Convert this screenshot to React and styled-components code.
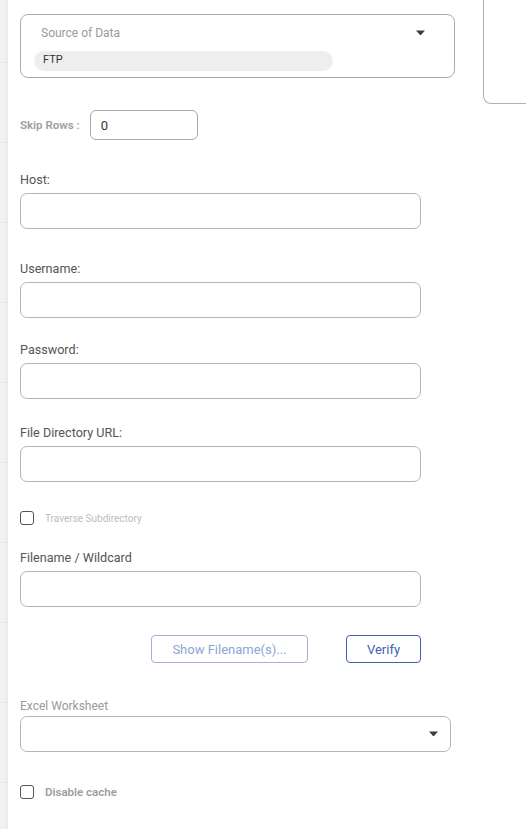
import React from "react";
import styled, { createGlobalStyle } from "styled-components";

const GlobalStyle = createGlobalStyle`
    html, body {
        margin: 0;
        padding: 0;
        background: #ffffff;
        overflow: hidden;
    }
    * {
        box-sizing: border-box;
    }
`;

function Caret() {
    return (
        <svg width="9" height="6" viewBox="0 0 9 6">
            <path d="M0 0.5 L9 0.5 L5 5 L4 5 Z" fill="#3d3d3d" />
        </svg>
    );
}

function TextField({ label, top }) {
    return (
        <Field $top={top}>
            <Label>{label}</Label>
            <Input type="text" />
        </Field>
    );
}

function Check({ label, top, small }) {
    return (
        <CheckRow $top={top}>
            <Box />
            <CheckText $small={small}>{label}</CheckText>
        </CheckRow>
    );
}

export default function App() {
    return (
        <Page>
            <GlobalStyle />
            <Strip />
            <Content>
                <TopRow>
                    <SourceBox>
                        <SourceHead>
                            <SourceLabel>Source of Data</SourceLabel>
                            <Caret />
                        </SourceHead>
                        <Chip>FTP</Chip>
                    </SourceBox>
                    <SidePanel />
                </TopRow>

                <SkipRow>
                    <SkipLabel>Skip Rows :</SkipLabel>
                    <SkipInput defaultValue="0" />
                </SkipRow>

                <TextField label="Host:" top={33} />
                <TextField label="Username:" top={33} />
                <TextField label="Password:" top={25} />
                <TextField label="File Directory URL:" top={27} />

                <Check label="Traverse Subdirectory" top={29} small />

                <TextField label="Filename / Wildcard" top={26} />

                <ButtonRow>
                    <Button $light>Show Filename(s)...</Button>
                    <Button $w={75}>Verify</Button>
                </ButtonRow>

                <Field $top={36}>
                    <Label $muted $gap={3}>Excel Worksheet</Label>
                    <Select>
                        <Caret />
                    </Select>
                </Field>

                <Check label="Disable cache" top={33} />
            </Content>
        </Page>
    );
}

const Page = styled.div`
    display: flex;
    width: 526px;
    height: 829px;
    font-family: Roboto, "Liberation Sans", sans-serif;
`;

const Strip = styled.div`
    width: 8px;
    flex-shrink: 0;
    background:
        repeating-linear-gradient(180deg, transparent 0 62px, #e6e6e6 62px 63px, transparent 63px 80px),
        linear-gradient(90deg, #f2f2f2 0%, #f0f0f0 70%, #e9e9e9 100%);
`;

const Content = styled.div`
    flex: 1;
    padding-left: 12px;
    display: flex;
    flex-direction: column;
    align-items: flex-start;
`;

const TopRow = styled.div`
    display: flex;
    align-items: flex-start;
    gap: 28px;
    width: 100%;
`;

const SourceBox = styled.div`
    margin-top: 14px;
    width: 435px;
    height: 64px;
    flex-shrink: 0;
    border: 1px solid #ababab;
    border-radius: 8px;
    padding: 11px 29px 0 13px;
`;

const SourceHead = styled.div`
    display: flex;
    justify-content: space-between;
    align-items: center;
    padding-left: 7px;
    height: 14px;
`;

const SourceLabel = styled.span`
    font-size: 12px;
    color: #9a9a9a;
`;

const Chip = styled.div`
    margin-top: 11px;
    width: 299px;
    height: 20px;
    border-radius: 10px;
    background: #eeeeee;
    font-size: 11px;
    color: #333333;
    padding-left: 9px;
    line-height: 18px;
`;

const SidePanel = styled.div`
    width: 60px;
    height: 104px;
    flex-shrink: 0;
    border: 1px solid #b0b0b0;
    border-top: none;
    border-right: none;
    border-bottom-left-radius: 8px;
`;

const SkipRow = styled.div`
    margin-top: 6px;
    display: flex;
    align-items: center;
    gap: 10px;
`;

const SkipLabel = styled.span`
    font-size: 11.5px;
    font-weight: 600;
    color: #9e9e9e;
`;

const SkipInput = styled.input`
    width: 108px;
    height: 30px;
    border: 1px solid #a9a9a9;
    border-radius: 6px;
    padding: 0 10px;
    font-family: inherit;
    font-size: 13px;
    color: #333333;
    outline: none;
`;

const Field = styled.div`
    margin-top: ${p => p.$top}px;
    display: flex;
    flex-direction: column;
`;

const Label = styled.label`
    font-size: ${p => (p.$muted ? "12px" : "12.6px")};
    line-height: 14px;
    color: ${p => (p.$muted ? "#9a9a9a" : "#555555")};
    margin-bottom: ${p => (p.$gap !== undefined ? p.$gap : 6)}px;
`;

const Input = styled.input`
    width: 401px;
    height: 36px;
    border: 1px solid #b5b5b5;
    border-radius: 7px;
    padding: 0 10px;
    font-family: inherit;
    font-size: 13px;
    outline: none;
`;

const CheckRow = styled.div`
    margin-top: ${p => p.$top}px;
    height: 14px;
    display: flex;
    align-items: center;
    gap: 11px;
`;

const Box = styled.span`
    width: 14px;
    height: 14px;
    border: 1px solid #555555;
    border-radius: 3px;
`;

const CheckText = styled.span`
    font-size: ${p => (p.$small ? "10px" : "11.5px")};
    font-weight: ${p => (p.$small ? 400 : 600)};
    color: ${p => (p.$small ? "#bdbdbd" : "#9e9e9e")};
`;

const ButtonRow = styled.div`
    margin-top: 28px;
    width: 401px;
    display: flex;
    justify-content: flex-end;
    gap: 38px;
`;

const Button = styled.button`
    width: ${p => (p.$w ? p.$w : 157)}px;
    height: 28px;
    background: #ffffff;
    border: 1px solid ${p => (p.$light ? "#9fb3dc" : "#3f63ab")};
    border-radius: 4px;
    color: ${p => (p.$light ? "#8ea4d4" : "#3f63ab")};
    font-family: inherit;
    font-size: 13px;
    padding: 0;
`;

const Select = styled.div`
    width: 431px;
    height: 36px;
    border: 1px solid #b5b5b5;
    border-radius: 7px;
    display: flex;
    align-items: center;
    justify-content: flex-end;
    padding-right: 12px;
`;
